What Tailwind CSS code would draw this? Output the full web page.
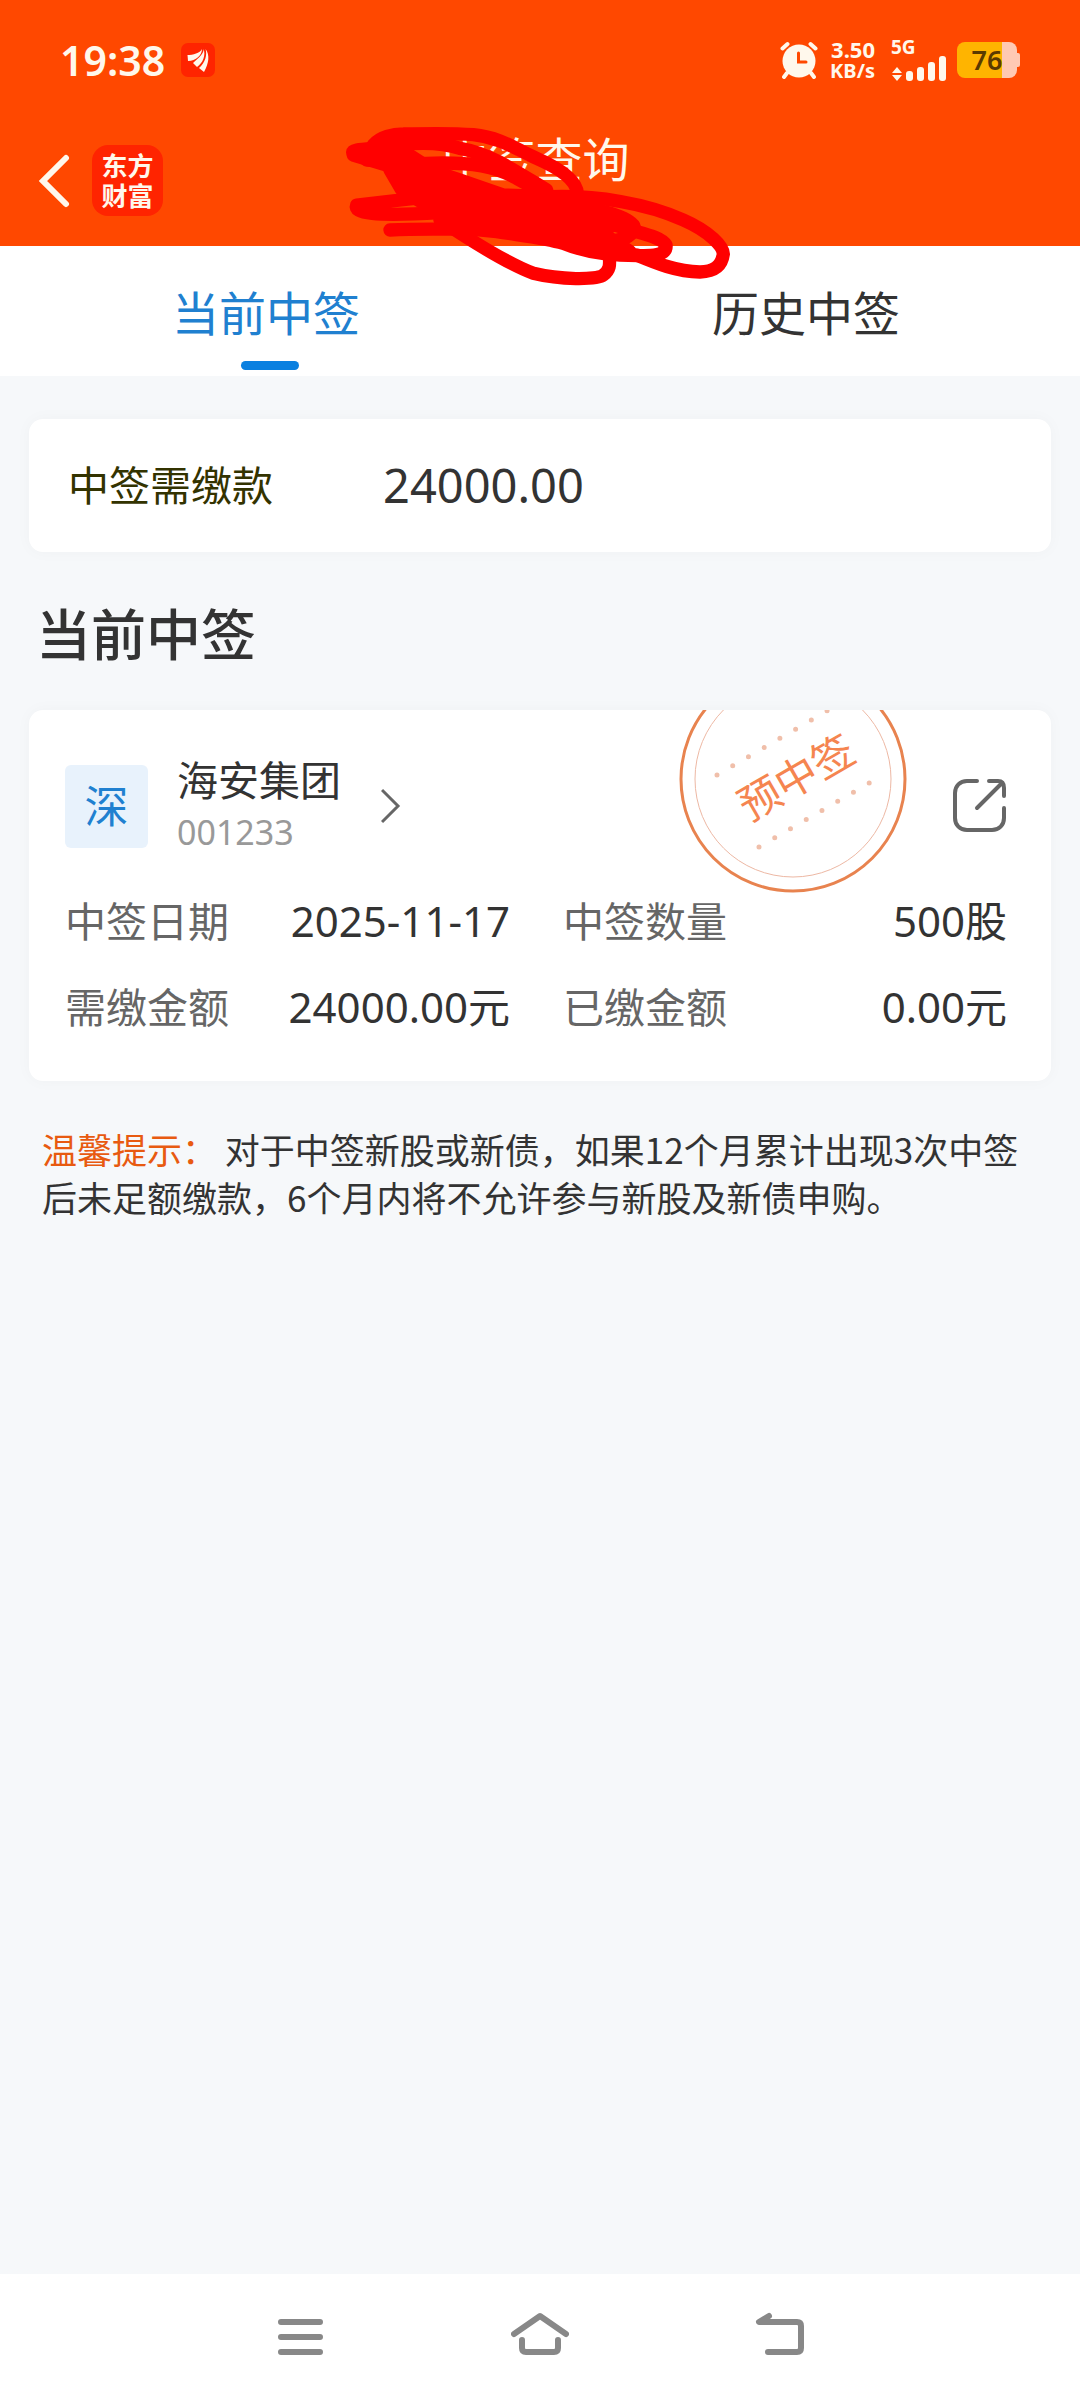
<!DOCTYPE html>
<html lang="zh-CN">
<head>
    <meta charset="UTF-8">
    <meta name="viewport" content="width=device-width, initial-scale=1.0">
    <title>中签查询</title>
    <script src="https://cdn.jsdelivr.net/npm/@tailwindcss/browser@4"></script>
    <style>
        body {
            font-family: "Noto Sans", "Noto Sans CJK SC", sans-serif;
        }
    </style>
</head>
<body class="flex min-h-screen flex-col bg-[#f6f8fa] text-[#333333]">
    <!-- Header -->
    <header class="relative bg-[#ff4800] text-[#fff8ec]">
        <div class="flex h-[120px] items-center justify-between pr-[60px] pl-[60px]">
            <div class="flex items-center gap-[16px]">
                <span class="text-[41px] leading-[48px] font-semibold">19:38</span>
                <svg class="size-[34px]" viewBox="0 0 34 34" aria-hidden="true">
                    <rect width="34" height="34" rx="7" fill="#ff2400"/>
                    <path d="M6.500 12C12 12 19 10 21 6C21 12 15 18 7 18Z" fill="#fff8ec"/>
                    <path d="M22.500 6C23 10 19 14 12 20L16 24C22 20 25 12 22.500 6Z" fill="#fff8ec"/>
                    <path d="M24.500 6C29 12 28 20 23 29L18 25C24 20 26.500 12 24.500 6Z" fill="#fff8ec"/>
                </svg>
            </div>
            <div class="flex items-center">
                <svg class="mr-[12px] size-[38px]" viewBox="0 0 38 38" fill="none" stroke="#fff8ec" stroke-linecap="round" aria-hidden="true">
                    <circle cx="19" cy="20" r="16.500" fill="#fff8ec" stroke="none"/>
                    <path d="M2.500 7.500L7.500 3M35.500 7.500L30.500 3M7 32l-3 4M31 32l3 4" stroke-width="4"/>
                    <path d="M18.500 12v9h7.500" stroke="#ff4800" stroke-width="3"/>
                </svg>
                <div class="mr-[16px] text-right font-bold">
                    <div class="text-[22px] leading-[21px]">3.50</div>
                    <div class="text-[20px] leading-[21px]">KB/s</div>
                </div>
                <div class="mr-[10px] flex flex-col">
                    <span class="text-[19px] leading-[15px] font-bold">5G</span>
                    <svg class="h-[26px] w-[56px]" viewBox="0 0 56 26" fill="#fff8ec" aria-hidden="true">
                        <path d="M6 12l5 6H1zM6 26l5-6H1z"/>
                        <rect x="15" y="16" width="7" height="10" rx="3"/>
                        <rect x="26" y="12" width="7" height="14" rx="3"/>
                        <rect x="37" y="7" width="7" height="19" rx="3"/>
                        <rect x="48" y="1" width="7" height="25" rx="3"/>
                    </svg>
                </div>
                <div class="flex items-center">
                    <div class="flex h-[36px] w-[60px] items-center justify-center rounded-[8px] bg-linear-to-r from-[#ffb400] from-75% to-[#ffc9b3] to-75% text-[27px] font-semibold text-[#5a3a00]">76</div>
                    <span class="h-[14px] w-[3px] rounded-r-[2px] bg-[#ffc9b3]"></span>
                </div>
            </div>
        </div>
        <div class="flex h-[126px] items-start pl-[38px]">
            <button type="button" aria-label="返回" class="mt-[34px]">
                <svg class="h-[54px] w-[34px]" viewBox="0 0 34 54" fill="none" stroke="#fff8ec" stroke-width="6" stroke-linecap="round"><path d="M28 4L5 27l23 23"/></svg>
            </button>
            <a href="#" class="mt-[25px] ml-[20px] grid size-[71px] place-content-center rounded-[16px] bg-[#ff2400] text-center text-[26px] leading-[30px] font-bold">东方<br>财富</a>
            <h1 class="flex-1 pt-[11px] pr-[172px] text-center text-[47px] leading-[56px]">中签查询</h1>
        </div>
        <!-- Marker scribble over the title -->
        <svg class="absolute top-[110px] left-[330px] h-[190px] w-[420px]" viewBox="0 0 1260 570" fill="none" stroke="#ff0000" stroke-width="40" stroke-linecap="round" stroke-linejoin="round" aria-hidden="true">
            <path d="M130 105C150 80 190 72 220 72C300 70 380 70 430 74C520 84 560 120 620 145C700 180 740 215 742 250"/>
            <path d="M70 130C60 120 90 118 130 115C240 95 330 95 390 115C480 130 560 185 650 240"/>
            <path d="M70 135L170 165L290 160C430 155 500 170 560 205L660 260"/>
            <path d="M110 150L225 155L390 210L520 255L660 260C800 255 950 280 1060 330C1140 365 1180 410 1180 432C1175 470 1150 485 1110 486C1040 485 980 460 920 435"/>
            <path d="M180 180L215 240L300 260L80 285C70 310 130 320 330 308"/>
            <path d="M180 360C280 355 350 360 400 355L500 365C600 380 650 385 700 400C760 425 850 440 960 436C1000 436 1010 420 1008 405C990 375 920 370 840 340"/>
            <path d="M330 330C420 390 530 460 610 490C690 510 800 510 820 495C840 480 840 465 838 440"/>
            <path d="M640 280C780 290 880 310 910 345C920 360 900 385 860 390"/>
            <path d="M160 140H200V170L230 200V250L290 285L400 340L520 360L700 390L840 430L900 425L840 385L790 360L880 340L700 290L500 255L400 225L300 175L230 130L160 120Z" fill="#ff0000"/>
        </svg>
    </header>

    <!-- Tabs -->
    <nav class="grid h-[130px] grid-cols-2 bg-white text-[47px] leading-[56px]">
        <a href="#" class="flex flex-col items-center pt-[39px] text-[#2080d0]"><span class="pr-2">当前中签</span><span class="mt-[20px] h-[9px] w-[58px] rounded-full bg-[#0a80e0]"></span></a>
        <a href="#" class="flex flex-col items-center pt-[39px]"><span class="pr-2">历史中签</span></a>
    </nav>

    <main class="flex flex-1 flex-col px-[29px] pt-[43px]">
        <section class="flex h-[133px] items-center rounded-[14px] bg-white px-[39px] shadow-[0_0_16px_rgba(0,0,0,0.03)]">
            <span class="w-[315px] text-[41px] text-[#333300]">中签需缴款</span>
            <span class="text-[47px]">24000.00</span>
        </section>

        <h2 class="mt-[50px] ml-[7px] text-[55px] leading-[64px] font-medium">当前中签</h2>

        <section class="relative mt-[44px] overflow-hidden rounded-[14px] bg-white pt-[44px] pr-[44px] pb-[46px] pl-[36px] shadow-[0_0_16px_rgba(0,0,0,0.03)]">
            <svg class="absolute top-0 right-[140px] h-[184px] w-[236px]" viewBox="0 0 236 184" fill="none" aria-hidden="true">
                <circle cx="118" cy="69" r="112" stroke="#e8834f" stroke-width="3"/>
                <circle cx="118" cy="69" r="98" stroke="#edb8a4" stroke-width="1"/>
                <g stroke="#f0bfaa" stroke-width="5" stroke-linecap="round">
                    <path d="M42 65L174 -12" stroke-dasharray="0 18.200"/>
                    <path d="M84 137L196 72" stroke-dasharray="0 18.200"/>
                </g>
                <text x="121" y="83" transform="rotate(-30 121 67)" text-anchor="middle" font-size="42" fill="#f58550">预中签</text>
            </svg>
            <div class="flex items-center">
                <span class="grid size-[83px] place-content-center rounded-[6px] bg-[#e8f2fc] text-[44px] text-[#2080d0]">深</span>
                <a href="#" class="ml-[29px] flex items-center gap-[40px]">
                    <span class="flex flex-col">
                        <span class="text-[41px] leading-[52px]">海安集团</span>
                        <span class="text-[34px] leading-[52px] text-[#999999]">001233</span>
                    </span>
                    <svg class="h-[36px] w-[20px]" viewBox="0 0 20 36" fill="none" stroke="#666666" stroke-width="3"><path d="M1 2l16 16L1 34"/></svg>
                </a>
                <button type="button" aria-label="分享" class="ml-auto">
                    <svg class="size-[54px]" viewBox="0 0 54 54" fill="none" stroke="#666666" stroke-width="4" stroke-linecap="round" stroke-linejoin="round"><path d="M24 2H14C7 2 2 7 2 14V39C2 46 7 51 14 51H39C46 51 51 46 51 39V29M36 2H45C49 2 51 4 51 9V17M24 29L49 4"/></svg>
                </button>
            </div>
            <dl class="mt-[35px] grid grid-cols-[445px_1fr] gap-x-[53px] gap-y-[30px] text-[42px] leading-[56px]">
                <div class="flex items-center justify-between"><dt class="text-[41px] text-[#666666]">中签日期</dt><dd>2025-11-17</dd></div>
                <div class="flex items-center justify-between"><dt class="text-[41px] text-[#666666]">中签数量</dt><dd>500股</dd></div>
                <div class="flex items-center justify-between"><dt class="text-[41px] text-[#666666]">需缴金额</dt><dd>24000.00元</dd></div>
                <div class="flex items-center justify-between"><dt class="text-[41px] text-[#666666]">已缴金额</dt><dd>0.00元</dd></div>
            </dl>
        </section>

        <p class="mt-[44px] px-[13px] font-['Noto_Sans_CJK_SC',sans-serif] text-[35px] leading-[48px]"><span class="text-[#e85a10]">温馨提示：</span> 对于中签新股或新债，如果12个月累计出现3次中签后未足额缴款，6个月内将不允许参与新股及新债申购。</p>
    </main>

    <!-- System navigation -->
    <footer class="flex h-[126px] items-center justify-center gap-[182px] bg-white">
        <button type="button" aria-label="菜单"><svg class="h-[50px] w-[58px]" viewBox="0 0 58 50" fill="none" stroke="#888888" stroke-width="6" stroke-linecap="round"><path d="M10 10h39M10 25h39M10 40h39"/></svg></button>
        <button type="button" aria-label="主页"><svg class="h-[50px] w-[58px]" viewBox="0 0 58 50" fill="none" stroke="#888888" stroke-width="6" stroke-linecap="round" stroke-linejoin="round"><path d="M3 22L29 4l26 18M11 28v8q0 4 4 4h28q4 0 4-4V28"/></svg></button>
        <button type="button" aria-label="返回上一级"><svg class="h-[50px] w-[58px]" viewBox="0 0 58 50" fill="none" stroke="#888888" stroke-width="6" stroke-linecap="round" stroke-linejoin="round"><path d="M18 4L8 10H46q4 0 4 4V36q0 4-4 4H17"/></svg></button>
    </footer>
</body>
</html>
